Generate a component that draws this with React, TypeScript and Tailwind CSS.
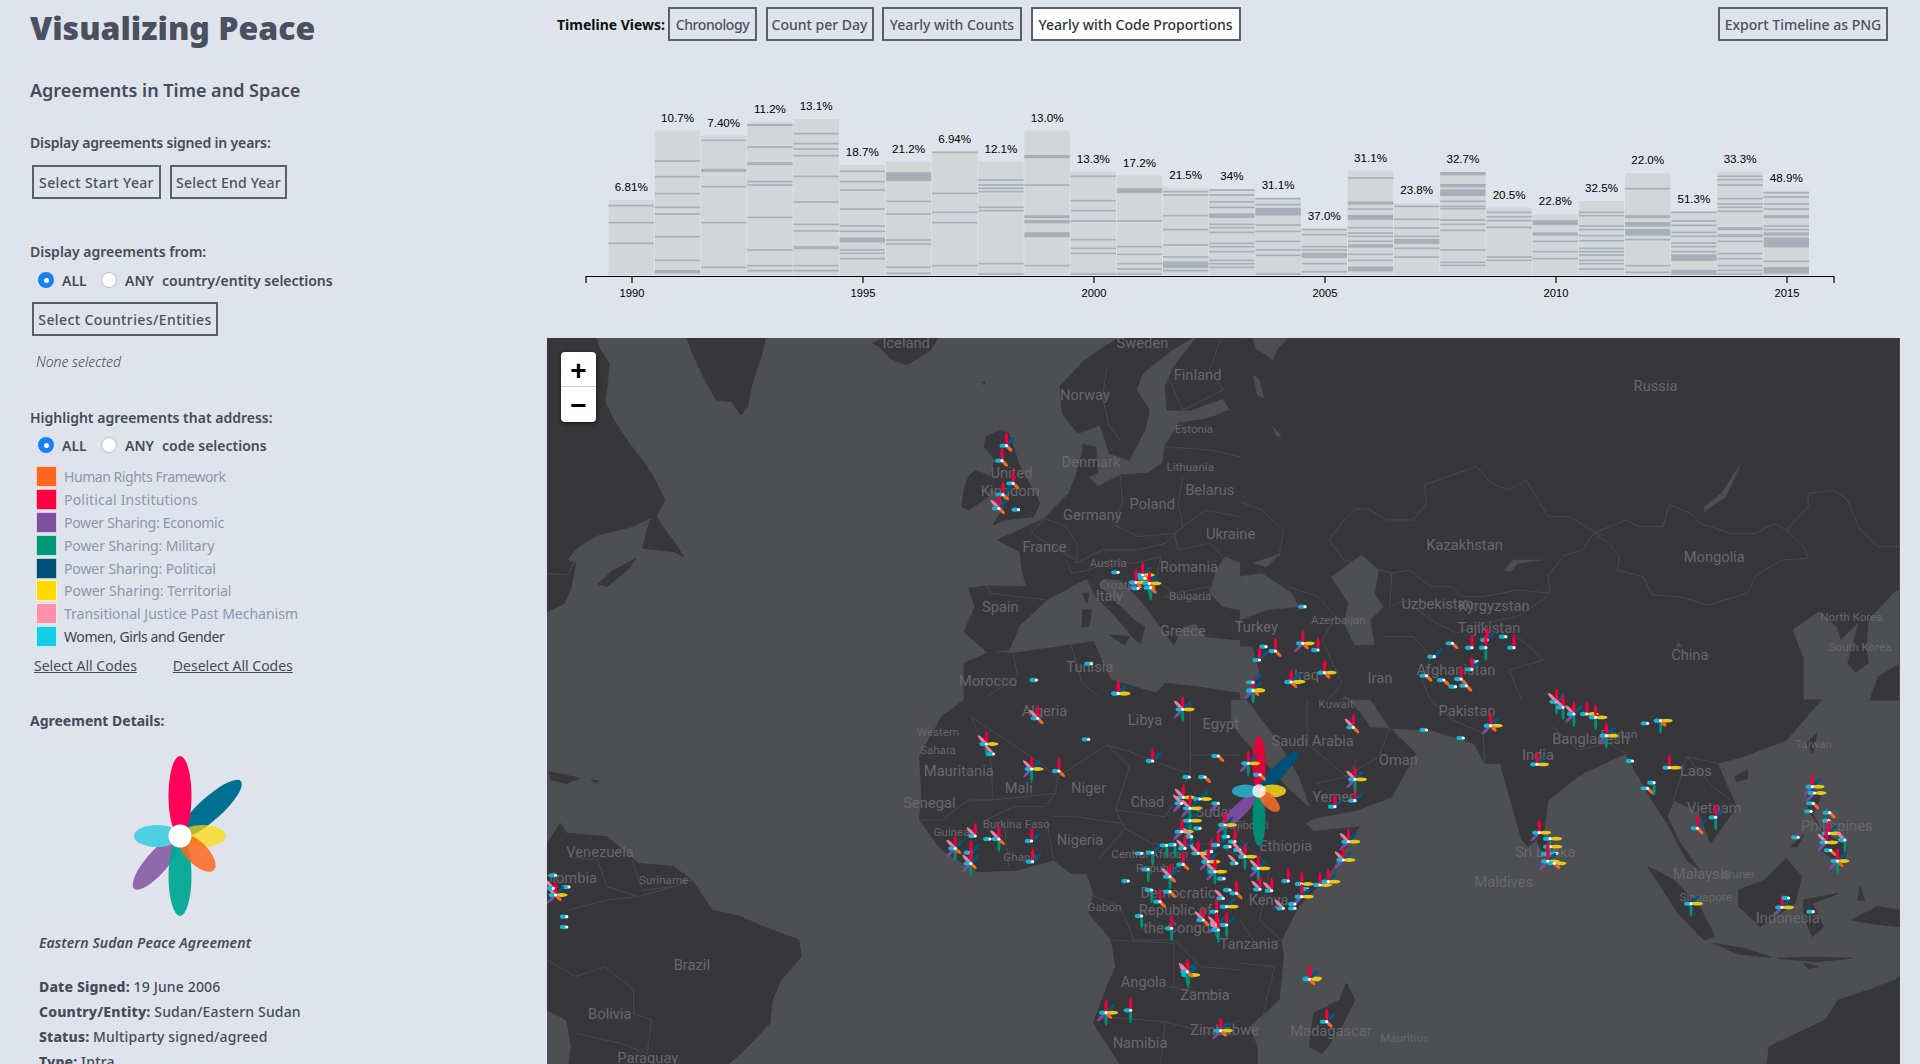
const ocean = "#4e4f53";
const land = "#37363b";
const borderColor = "#4a4a4f";

const petals: Record<string, { a: number; l: number; w: number; c: string }> = {
  b: { a: 45, l: 12, w: 3.2, c: "#005a82" },
  r: { a: 0, l: 13, w: 3.4, c: "#f0003c" },
  v: { a: 225, l: 12, w: 3.2, c: "#7a4ea0" },
  g: { a: 180, l: 13, w: 3.2, c: "#008f78" },
  p: { a: 315, l: 12, w: 3.2, c: "#f080a0" },
  y: { a: 90, l: 12, w: 3.8, c: "#e8c814" },
  o: { a: 135, l: 8, w: 3.4, c: "#f26a24" },
  c: { a: 270, l: 7, w: 4.4, c: "#16b4d0" },
};

type M = [number, number, string];

const Marker = ({ x, y, codes }: { x: number; y: number; codes: string }) => (
  <g transform={`translate(${x} ${y})`}>
    {"brvgpyoc".split("").filter((k) => codes.includes(k)).map((k) => (
      <ellipse key={k} cx={0} cy={-petals[k].l / 2} rx={petals[k].w / 2} ry={petals[k].l / 2} fill={petals[k].c} transform={`rotate(${petals[k].a})`} />
    ))}
    <circle r={1.6} fill="#fff" />
  </g>
);

// crop coordinates -> page pixels
const z7: M[] = [
  [355,41,"rbyc"],[548,88,"rpbygvc"],[266,178,"c"],[458,243,"rbc"],[655,228,"oc"],[95,267,"rpbygvc"],[177,273,"roc"],
  [745,250,"rybvgc"],[568,291,"c"],[615,291,"oc"],[780,284,"oc"],[655,370,"vc"],[550,352,"rpyc"],[600,357,"ybc"],
  [570,385,"rpbygvc"],[545,370,"pvc"],[570,422,"ybgc"],[600,445,"c"],[675,435,"rybvgc"],[545,455,"rybvc"],[575,470,"pgc"],
  [95,483,"rbc"],[98,545,"rbc"],[425,520,"c"],[458,518,"bgc"],[500,496,"gc"],[525,494,"gc"],[555,505,"rpbc"],[595,520,"rpyc"],
  [635,515,"rbc"],[655,495,"rbc"],[685,470,"c"],[705,485,"rc"],[690,500,"c"],[720,510,"pbc"],[735,530,"rpygc"],[625,545,"rpbygvc"],
  [550,553,"roc"],[645,575,"rpygvc"],[710,550,"pc"],[775,565,"rpbygvc"],[445,568,"gc"],[510,590,"rpbgoc"],[385,603,"c"],[672,596,"c"],
  [780,628,"rpc"],[815,632,"rpc"],[865,603,"rc"],[905,612,"ryc"],[925,627,"c"],[960,615,"rybc"],[985,605,"rbyc"],[1045,485,"rpbyvc"],
  [1030,540,"rpbyvc"],[1005,380,"rbc"],[1065,362,"rbc"],[1065,298,"rpbyvgc"],[1060,142,"rpoc"],[455,630,"gc"],[510,635,"oc"],[480,665,"roc"],
  [425,708,"gc"],[515,745,"rgc"],[850,685,"pc"],[885,685,"c"],[905,650,"rbyvc"],[885,672,"c"],[690,630,"c"],[710,640,"roc"],[670,655,"pc"],
  [680,680,"ybc"],[650,695,"rc"],[610,720,"rpoc"],[650,735,"rpbgvc"],[680,735,"rbgc"],[655,750,"rpgc"],[565,885,"rpbygc"],[930,895,"rbyc"],
  [760,30,"rybgovc"],[880,5,"ybc"],[113,115,"rpoc"],
];
const q1: M[] = [
  [1045,347,"rboc"],[1035,392,"rco"],[1060,460,"rco"],[1037,494,"rboc"],[1028,535,"rpbco"],[1072,539,"c"],[1295,727,"c"],
  [1350,735,"rbyoc"],[1335,757,"rcyov"],[1365,760,"rbyogc"],[1355,745,"c"],[1340,775,"c"],[1368,773,"ogc"],[1235,1001,"c"],[1112,1050,"c"],[1295,1090,"rbyc"],
];
const q3: M[] = [
  [1000,132,"rpygc"],[1016,162,"pc"],[1450,815,"rpbogc"],[1268,938,"rbyogvc"],[1323,931,"rgc"],[1525,992,"rbyovc"],
  [975,408,"rpc"],[1028,417,"rpogc"],[930,445,"rpbogvc"],[965,458,"rbc"],[965,490,"rpbogvc"],[1008,417,"c"],
  [35,526,"c"],[65,561,"c"],[35,585,"rpbyovc"],[30,565,"pc"],[60,650,"c"],[60,681,"c"],
];
const q2: M[] = [
  [150,830,"c"],[145,940,"rvyoc"],[60,950,"c"],[82,963,"roc"],[180,960,"rc"],[45,990,"rbc"],[195,1028,"rcyo"],[118,1056,"rbyoc"],[30,1057,"bc"],[30,1082,"ycgv"],
  [490,940,"oc"],[535,953,"rc"],[570,930,"rbc"],[567,953,"rgc"],[613,920,"c"],[632,953,"rc"],[448,980,"bc"],[547,995,"c"],[535,1018,"rbc"],[430,1037,"oc"],
  [470,1050,"oc"],[510,1047,"roc"],[497,1070,"c"],[522,1067,"oc"],
];
const q4: M[] = [
  [430,90,"c"],[515,114,"c"],[578,77,"rbyovc"],[730,5,"rpgbc"],[745,22,"rpgc"],[770,42,"rpbgvc"],[800,42,"ryc"],[820,52,"rgyc"],[845,107,"rbyvgc"],[685,193,"rbyc"],
  [940,70,"c"],[970,62,"yogc"],[905,183,"c"],[990,203,"ryc"],[955,248,"gc"],[940,265,"oc"],[1097,352,"rbgc"],[1055,385,"rboc"],[690,398,"rvyc"],[715,416,"ygc"],
  [715,440,"yc"],[710,462,"rc"],[730,460,"c"],[710,484,"rbyvc"],[725,490,"yoc"],[1320,260,"rbyvc"],[1325,279,"yvc"],[1322,310,"oc"],[1317,334,"c"],[1360,338,"oc"],
  [1358,362,"c"],[1358,400,"rybc"],[1287,412,"c"],[1395,420,"pgc"],[1352,427,"rpyvc"],[1362,451,"oc"],[1378,483,"rbyogvc"],[1040,611,"bgyc"],[1250,622,"rbyvc"],
  [1265,594,"c"],[1322,635,"c"],[160,838,"rbyoc"],[200,965,"rboc"],
];
const markers: M[] = [
  ...z7.map(([x, y, c]): M => [1000 + x / 3, 680 + y / 3, c]),
  ...q1.map(([x, y, c]): M => [540 + x / 2.24, 330 + y / 3, c]),
  ...q3.map(([x, y, c]): M => [540 + x / 2.24, 700 + y / 3, c]),
  ...q2.map(([x, y, c]): M => [1240 + x / 2.306, 330 + y / 3, c]),
  ...q4.map(([x, y, c]): M => [1240 + x / 2.306, 700 + y / 3, c]),
];

const labels: [string, number, number, number?][] = [
  ["Iceland",740,280],["Sweden",933,280],["Finland",978,306],["Norway",886,323],["Russia",1352,315],["Estonia",975,350,9.5],["Denmark",891,377],
  ["Lithuania",972,381,9.5],["Belarus",988,400],["United",826,386],["Kingdom",825,401],["Poland",941,412],["Germany",892,421],["Ukraine",1005,436],
  ["France",853,447],["Austria",905,459,9.5],["Croatia",913,477,9.5],["Romania",971,463],["Italy",906,487],["Bulgaria",972,486,9.5],["Spain",817,496],
  ["Greece",966,515],["Turkey",1026,512],["Kazakhstan",1196,445],["Mongolia",1400,455],["Uzbekistan",1174,493],["Kyrgyzstan",1220,495],
  ["Azerbaijan",1093,506,9.5],["Tajikistan",1216,513],["Afghanistan",1189,547],["China",1380,535],["North Korea",1512,503,9.5],["South Korea",1519,528,9.5],
  ["Iraq",1067,551],["Iran",1127,554],["Kuwait",1091,574,9.5],["Pakistan",1198,581],["Morocco",807,556],["Tunisia",890,545],["Algeria",853,581],
  ["Libya",935,588],["Egypt",997,591],["Saudi Arabia",1072,605],["Oman",1142,621],["Western",766,597,9.5],["Sahara",766,612,9.5],["Mauritania",783,630],
  ["Mali",832,644],["Niger",889,644],["Chad",937,655],["Senegal",759,656],["Sudan",993,663],["Yemen",1090,651],["India",1256,617],["Bangladesh",1299,604],
  ["Bhutan",1322,599,9.5],["Taiwan",1481,607,9.5],["Laos",1385,630],["Vietnam",1400,660],["Philippines",1500,675],["Malaysia",1390,714],["Brunei",1419,713,9.5],
  ["Singapore",1393,732,9.5],["Indonesia",1460,750],["Maldives",1228,720],["Sri Lanka",1262,696],["Burkina Faso",830,672,9.5],["Guinea",777,679,9.5],
  ["Nigeria",882,686],["Ethiopia",1050,691],["Djibouti",1020,673,9.5],["Ghana",833,699,9.5],["Central African",939,697,9.5],["Republic",946,708,9.5],
  ["Gabon",902,740,9.5],["Democratic",962,729],["Republic of",960,743],["the Congo",961,758],["Kenya",1036,735],["Tanzania",1020,771],["Angola",934,802],
  ["Zambia",984,813],["Zimbabwe",1000,841],["Namibia",931,852],["Madagascar",1087,842],["Mauritius",1147,847,9.5],["Brazil",565,788],["Bolivia",498,828],
  ["Paraguay",529,864],["Venezuela",490,696],["Colombia",462,717],["Suriname",542,718,9.5],
];

const Land = ({ pts }: { pts: string }) => <polygon points={pts} fill={land} stroke={land} strokeLinejoin="round" strokeWidth={1} vectorEffect="non-scaling-stroke" />;
const Water = ({ pts }: { pts: string }) => <polygon points={pts} fill={ocean} stroke={ocean} strokeLinejoin="round" strokeWidth={0.5} vectorEffect="non-scaling-stroke" />;
const Border = ({ pts }: { pts: string }) => <polyline points={pts} fill="none" stroke={borderColor} strokeWidth={1} vectorEffect="non-scaling-stroke" />;

const WorldMap = () => (
  <svg viewBox="547 338 1353 726" className="block h-[726px] w-[1353px]">
    <rect x={547} y={338} width={1353} height={726} fill={ocean} />

    {/* north atlantic + europe */}
    <g transform="translate(540 330) scale(0.4464 0.3333)">
      <Land pts="330,25 505,25 495,80 475,160 465,230 450,255 430,215 395,210 370,150 345,80" />
      <Land pts="745,40 770,25 890,25 875,60 820,105 785,85 760,50" />
      <Land pts="16,25 125,25 135,60 155,100 150,170 145,215 165,270 200,340 250,430 280,510 262,555 205,590 130,615 85,650 60,690 80,700 70,770 55,820 16,845" />
      <Land pts="255,545 275,590 300,635 322,680 300,665 230,655 240,600" />
      <Land pts="130,762 160,725 215,685 200,715 150,770" />
      <Land pts="990,155 997,155 995,165" />
      <Land pts="1030,300 1050,310 1065,370 1075,410 1100,470 1120,520 1105,560 1040,570 1015,585 1040,530 1030,490 1000,470 1010,430 1020,390 995,350 1000,320" />
      <Land pts="975,420 1010,440 1005,500 960,540 945,530 950,480 960,440" />
      <Land pts="1295,25 1220,90 1165,170 1170,250 1205,310 1255,285 1275,370 1320,390 1355,300 1365,240 1335,180 1350,130 1415,60 1460,25" />
      <Land pts="1215,345 1245,350 1250,430 1225,440" />
      <Land pts="1568,25 1470,25 1420,110 1400,170 1405,240 1460,240 1530,205 1545,240 1500,265 1430,280 1400,350 1395,400 1360,430 1300,435 1250,470 1228,440 1235,390 1220,340 1200,440 1185,490 1130,565 1075,600 1025,630 1075,665 1080,720 1090,770 1000,768 960,775 975,830 950,905 1000,965 1050,960 1075,885 1135,810 1190,770 1225,745 1245,800 1290,860 1330,925 1345,940 1355,890 1330,870 1300,830 1255,770 1260,745 1300,750 1345,810 1385,880 1420,945 1440,890 1470,880 1490,920 1568,930" />
      <Land pts="1215,840 1235,840 1230,890 1215,890" />
      <Land pts="1275,915 1320,920 1310,945" />
      <Land pts="1215,790 1230,790 1225,820" />
      <Land pts="950,1000 1010,965 1060,970 1190,945 1240,935 1260,1000 1280,1050 1380,1090 1400,1060 1470,1070 1568,1090 1568,1112 950,1112" />
      <Water pts="1568,700 1535,680 1515,720 1500,790 1530,830 1568,840" />
      <Border pts="1130,565 1180,590 1205,650 1200,700 1260,660 1340,660 1400,640 1440,590 1430,520 1440,440" />
      <Border pts="1300,435 1305,520 1280,580 1340,620 1420,610 1490,540 1568,560" />
      <Border pts="1180,690 1190,730 1230,720 1280,690 1330,700 1390,680" />
      <Border pts="1420,610 1430,660 1500,640 1530,680" />
      <Border pts="1390,680 1380,750 1420,790 1500,770 1500,810 1400,800" />
      <Border pts="1130,565 1100,610 1200,690" />
      <Border pts="1000,768 1010,790 1135,810" />
      <Border pts="1270,110 1260,200 1275,290 1300,330" />
      <Border pts="1400,120 1440,240 1530,180 1500,120 1525,25" />
      <Border pts="1400,350 1500,360 1568,380" />
      <Border pts="1060,970 1070,1040 1000,1100" />
      <Border pts="1190,945 1215,1060 1250,1100" />
      <Border pts="16,730 60,735 90,670" />
    </g>

    {/* russia + central asia */}
    <g transform="translate(1240 330) scale(0.4337 0.3333)">
      <rect x={0} y={25} width={1520} height={1087} fill={land} />
      <Water pts="30,25 110,25 85,60 75,90 55,70 35,55" />
      <Water pts="30,135 45,150 55,205 40,195" />
      <Water pts="75,290 95,315 85,320" />
      <Water pts="1155,400 1140,445 1120,500 1070,545 1070,530 1110,490 1140,430" />
      <Water pts="280,675 320,720 310,790 330,830 300,870 310,945 265,945 240,880 250,820 210,740" />
      <Water pts="0,740 50,730 120,790 135,830 60,840 0,870" />
      <Water pts="30,700 95,670 60,710" />
      <Water pts="610,720 630,690 695,690 640,700 625,725" />
      <Water pts="0,950 28,950 45,1030 20,1100 0,1112" />
      <Water pts="1300,1112 1300,985 1275,900 1335,845 1375,890 1385,930 1425,880 1400,1000 1420,1030 1450,1000 1445,950 1450,870 1510,785 1520,780 1520,1000 1470,1040 1450,1112" />
      <Water pts="240,1100 262,1112 235,1112" />
      <Water pts="1010,935 1020,950 1005,950" />
      <Border pts="205,630 240,570 270,535 300,540 340,570 400,570 430,520 425,465 545,410 580,460 620,480 660,450 710,560 760,560 810,600 830,615" />
      <Border pts="815,610 890,570 920,590 975,590 990,525 1040,550 1060,580 1130,610 1190,610 1230,580 1260,600 1300,650 1310,685 1250,690 1190,735 1170,790 1080,825 1010,800 950,795 930,740 870,720 875,680 850,640 820,615" />
      <Border pts="1260,600 1310,530 1310,490 1370,480 1400,510 1430,600 1470,650 1520,650" />
      <Border pts="205,630 240,690 350,730 390,720 440,770 490,770 510,800 560,800 640,780 715,790 710,735 750,675 790,660 815,610" />
      <Border pts="350,730 345,830 380,810 440,870 500,910 560,880 640,860 710,800" />
      <Border pts="330,920 400,920 440,980 420,1050 440,1112" />
      <Border pts="640,920 700,990 620,1020 650,1112" />
      <Border pts="0,515 50,540 100,600 90,680" />
      <Border pts="110,770 180,800 220,860 190,930 235,1060 200,1112" />
    </g>

    {/* south america + west africa */}
    <g transform="translate(540 700) scale(0.4464 0.3333)">
      <Land pts="950,0 900,50 850,170 855,280 850,360 900,450 980,515 1070,510 1150,480 1190,520 1225,520 1240,580 1230,640 1280,720 1290,800 1270,860 1240,970 1300,1095 1570,1095 1570,0" />
      <Land pts="16,430 45,370 60,400 150,410 220,490 300,500 340,540 385,630 450,650 500,680 580,720 585,770 540,840 520,900 515,970 450,1060 420,1095 65,1095 70,1040 60,960 16,930" />
      <Land pts="20,215 90,235 60,250 25,240" />
      <Land pts="115,240 132,243 125,250" />
      <Border pts="965,50 1100,170 1160,230 1155,280 1015,300 1010,180 965,50" />
      <Border pts="1160,230 1270,135 1320,155 1440,215 1457,215 1457,0" />
      <Border pts="1457,165 1570,165" />
      <Border pts="1270,135 1320,200 1290,330 1310,385 1250,480" />
      <Border pts="1145,350 1200,350 1300,370" />
      <Border pts="1000,360 1060,320 1130,320 1155,280" />
      <Border pts="1310,385 1370,430 1420,440 1510,430 1568,470" />
      <Border pts="1290,330 1400,350 1430,290 1457,215" />
      <Border pts="850,360 900,360 960,300 1015,300" />
      <Border pts="1040,370 1050,500" />
      <Border pts="1135,360 1150,480" />
      <Border pts="1225,580 1300,620 1330,720 1420,720 1480,800 1568,810" />
      <Border pts="1280,720 1420,730 1420,860" />
      <Border pts="1250,950 1400,965 1500,1000 1568,960" />
      <Border pts="1400,970 1390,1095" />
      <Border pts="1410,860 1490,880 1550,880" />
      <Border pts="60,470 130,480 150,560 220,590 300,560 340,540" />
      <Border pts="205,480 230,570 300,560" />
      <Border pts="16,780 80,830 145,800 210,870 210,940 250,960 240,1060 180,1030 80,1000" />
      <Border pts="65,630 150,600 220,590" />
    </g>

    {/* indian ocean */}
    <g transform="translate(1240 700) scale(0.4337 0.3333)">
      <Land pts="0,1095 40,1095 40,1040 20,980 90,900 100,770 95,720 135,620 200,530 275,380 170,395 150,370 170,355 270,330 350,290 405,160 345,85 440,90 540,130 565,190 600,190 650,420 665,440 700,400 710,300 790,220 890,160 910,210 945,290 985,370 1030,480 1060,510 1015,430 985,350 1000,300 1060,340 1085,430 1145,320 1100,190 1160,170 1260,120 1340,0 0,0" />
      <Water pts="-20,0 15,0 45,50 90,130 135,230 160,320 115,270 60,190 10,120 -20,70" />
      <Water pts="250,0 300,0 345,85 300,80 280,40" />
      <Land pts="695,400 720,430 710,462 695,450 685,425" />
      <Land pts="245,850 265,900 230,990 190,1060 160,1040 170,940 230,900" />
      <Land pts="940,500 1000,540 1060,620 1095,710 1070,720 1010,640" />
      <Land pts="1260,475 1295,530 1280,610 1200,680 1150,620 1150,570 1210,540" />
      <Land pts="1300,600 1380,580 1320,610 1345,680 1320,710 1300,650" />
      <Land pts="1090,730 1160,745 1225,772 1150,762" />
      <Land pts="1240,775 1320,772 1410,775 1330,785" />
      <Land pts="1300,790 1335,800 1310,805" />
      <Land pts="1410,660 1470,620 1520,630 1520,680 1450,670" />
      <Land pts="1215,1095 1220,1040 1350,960 1380,900 1450,870 1510,840 1520,830 1520,1095" />
      <Land pts="1330,100 1320,160 1305,130" />
      <Land pts="1140,230 1170,210 1170,235 1145,245" />
      <Land pts="1310,260 1340,290 1320,340 1340,390 1400,440 1390,500 1340,450 1350,400 1310,330" />
      <Land pts="1270,440 1300,405 1285,440" />
      <Land pts="1430,560 1440,600 1425,600" />
      <Border pts="345,85 320,170 245,230 175,250" />
      <Border pts="155,0 155,130 245,230 270,180" />
      <Border pts="565,190 560,100 490,60 440,0" />
      <Border pts="890,160 850,130 780,150 720,80" />
      <Border pts="1000,300 1030,170 1100,190" />
      <Border pts="1030,170 1090,260 1130,300" />
      <Border pts="0,420 70,500 45,660 95,720" />
      <Border pts="0,790 80,800 50,960 90,900" />
      <Border pts="0,660 40,740 95,720" />
    </g>

    {/* labels */}
    <g transform="scale(1.2245)" className="font-['Roboto',sans-serif]">
      {labels.map(([t, x, y, s]) => (
        <text key={t + x} x={x} y={y + 4} textAnchor="middle" fontSize={s ?? 12} fill="#68686d">{t}</text>
      ))}
    </g>

    {/* selected agreement */}
    <g transform="translate(1259 791)">
      <ellipse cy={-27.5} rx={6.5} ry={27.5} fill="#e8003a" opacity={0.95} />
      <ellipse cy={-27.5} rx={6.5} ry={27.5} fill="#005078" transform="rotate(45)" />
      <ellipse cy={-27.5} rx={6.5} ry={27.5} fill="#7a4b9a" transform="rotate(225)" />
      <ellipse cy={-27.5} rx={6.5} ry={27.5} fill="#008c74" transform="rotate(180)" />
      <ellipse cy={-13.5} rx={6.5} ry={13.5} fill="#2aa9c4" transform="rotate(270)" opacity={0.95} />
      <ellipse cy={-13.5} rx={6.5} ry={13.5} fill="#e5c51a" transform="rotate(90)" opacity={0.95} />
      <ellipse cy={-14} rx={6.5} ry={14} fill="#e8672d" transform="rotate(135)" opacity={0.95} />
      <circle r={6.8} fill="#fff" opacity={0.8} />
    </g>

    {markers.map(([x, y, c], i) => <Marker key={i} x={x} y={y} codes={c} />)}
  </svg>
);

type Bar = { label: string; top: number; lines: (number | [number, number])[] };

const bars: Bar[] = [
  { label: "6.81%", top: 600, lines: [617,668,730] },
  { label: "10.7%", top: 392, lines: [483,530,581,622,642,710,781,[815,10]] },
  { label: "7.40%", top: 407, lines: [421,[511,9],560,668,802] },
  { label: "11.2%", top: 367, lines: [[375,6],441,[491,9],545,555,652,750,797,812] },
  { label: "13.1%", top: 357, lines: [401,431,447,467,529,606,673,693,[743,9],797,812] },
  { label: "18.7%", top: 495, lines: [514,545,570,627,678,694,[720,15],750,760,776] },
  { label: "21.2%", top: 485, lines: [[530,27],604,642,720,732,802,820] },
  { label: "6.94%", top: 455, lines: [457,580,637,668,797] },
  { label: "12.1%", top: 485, lines: [540,555,565,575,622,632,791,822] },
  { label: "13.0%", top: 392, lines: [[470,10],555,[650,9],[665,10],[704,15],797] },
  { label: "13.3%", top: 515, lines: [529,602,632,663,719,745,760,822] },
  { label: "17.2%", top: 527, lines: [[572,15],663,740,763,791,807,822] },
  { label: "21.5%", top: 563, lines: [575,585,647,689,735,771,[794,20],812] },
  { label: "34%", top: 567, lines: [570,585,606,622,[647,14],673,683,697,730,740,755,781,791,802] },
  { label: "31.1%", top: 593, lines: [596,614,[635,23],675,694,724,750,766,822] },
  { label: "37.0%", top: 686, lines: [689,704,740,750,[766,15],791,815] },
  { label: "31.1%", top: 512, lines: [534,[609,10],627,[652,15],683,699,709,724,[738,10],763,781,[807,15]] },
  { label: "23.8%", top: 610, lines: [619,658,684,709,[724,15],745,771] },
  { label: "32.7%", top: 515, lines: [[521,10],[557,10],[578,20],604,619,626,660,673,691,750,787,796] },
  { label: "20.5%", top: 623, lines: [637,650,662,682,771,781] },
  { label: "22.8%", top: 643, lines: [[668,15],[702,10],724,755,776] },
  { label: "32.5%", top: 603, lines: [637,647,678,689,707,722,745,755,765,781,791,807] },
  { label: "22.0%", top: 520, lines: [566,[650,9],[673,14],[697,20],719,797,817] },
  { label: "51.3%", top: 635, lines: [637,663,676,697,709,729,740,755,[773,20],[817,15]] },
  { label: "33.3%", top: 515, lines: [529,539,555,596,612,622,634,[686,9],[707,9],724,761,776,797,811,822] },
  { label: "48.9%", top: 572, lines: [578,591,612,627,[650,9],678,689,[702,10],[727,30],784,[811,20]] },
];

const Timeline = () => (
  <svg viewBox="547 41 1373 297" className="block h-[297px] w-[1373px] font-['Liberation_Sans',Arial,sans-serif]">
    {bars.map((b, i) => {
      const x = 608.6 + i * 46.2;
      return (
        <g key={i}>
          <rect x={x} y={b.top / 3} width={45.4} height={275 - b.top / 3} fill="#d2d6d9" />
          {b.lines.map((l, j) => {
            const [c, h] = Array.isArray(l) ? l : [l, 5];
            return <rect key={j} x={x} y={(c - h / 2) / 3} width={45.4} height={h / 3} fill="#a8afb9" />;
          })}
          <text x={x + 22.7} y={b.top / 3 - 9} textAnchor="middle" fontSize={11.6} fill="#000">{b.label}</text>
        </g>
      );
    })}
    <path d="M586 283V276.5H1834V283" fill="none" stroke="#000" strokeWidth={1.2} />
    {[1990, 1995, 2000, 2005, 2010, 2015].map((y, i) => {
      const x = 632 + i * 231;
      return (
        <g key={y}>
          <line x1={x} x2={x} y1={276.5} y2={283} stroke="#000" strokeWidth={1.2} />
          <text x={x} y={297} textAnchor="middle" fontSize={11.2} fill="#000">{y}</text>
        </g>
      );
    })}
  </svg>
);

const Btn = ({ children, active, className = "" }: { children: string; active?: boolean; className?: string }) => (
  <button className={`h-[34px] shrink-0 border-2 border-[#5a6070] whitespace-nowrap text-[14px] font-medium ${active ? "bg-white text-[#2d3340]" : "text-[#4a5160]"} ${className}`}>
    {children}
  </button>
);

const RadioRow = ({ rest }: { rest: string }) => (
  <div className="flex h-5 items-center pl-2 text-[14px] font-semibold text-[#454b5a]">
    <span className="flex h-4 w-4 items-center justify-center rounded-full bg-[#1a7ff5]">
      <span className="h-[5px] w-[5px] rounded-full bg-white" />
    </span>
    <span className="ml-2 w-[39px]">ALL</span>
    <span className="h-4 w-4 rounded-full border border-[#b8bcc4] bg-white" />
    <span className="ml-2 w-[37px]">ANY</span>
    <span>{rest}</span>
  </div>
);

const codes = [
  ["#ff6620", "Human Rights Framework", "tracking-[-0.45px]"],
  ["#ff0040", "Political Institutions", "tracking-[0.2px]"],
  ["#7e50a0", "Power Sharing: Economic", "tracking-[-0.3px]"],
  ["#009a7a", "Power Sharing: Military", "tracking-[-0.1px]"],
  ["#005078", "Power Sharing: Political", "tracking-[-0.1px]"],
  ["#ffda00", "Power Sharing: Territorial", ""],
  ["#ff8fab", "Transitional Justice Past Mechanism", ""],
  ["#10cfe6", "Women, Girls and Gender", "tracking-[-0.4px]"],
];

const BigFlower = () => (
  <svg viewBox="0 0 300 170" className="mt-[19px] block h-[170px] w-[300px]">
    <g transform="translate(150 86)">
      <ellipse cy={-41} rx={11.5} ry={41} fill="#007092" transform="rotate(48)" />
      <ellipse cy={-40} rx={11.5} ry={40} fill="#ff0059" />
      <ellipse cy={-35} rx={11} ry={35} fill="#9068ac" transform="rotate(221)" />
      <ellipse cy={-40} rx={11.5} ry={40} fill="#00a896" fillOpacity={0.95} transform="rotate(180)" />
      <ellipse cy={-23} rx={11} ry={23} fill="#4fcfe2" transform="rotate(270)" />
      <ellipse cy={-23} rx={11} ry={23} fill="#ffda00" fillOpacity={0.7} transform="rotate(90)" />
      <ellipse cy={-24} rx={11} ry={24} fill="#ff6620" fillOpacity={0.85} transform="rotate(135)" />
      <circle r={11.5} fill="#fff" />
    </g>
  </svg>
);

const Detail = ({ k, v }: { k: string; v: string }) => (
  <p className="pl-[9px] text-[14px] leading-[25px] font-medium tracking-[0.15px] text-[#454b5a]">
    <b className="font-extrabold">{k}:</b> {v}
  </p>
);

export default function App() {
  return (
    <div className="flex h-[1064px] w-[1920px] overflow-hidden bg-[#dfe3eb] font-['Noto_Sans',sans-serif]">
      {/* sidebar */}
      <div className="w-[547px] shrink-0 pl-[30px] pt-[8px] text-[#454b5a]">
        <h1 className="text-[32px] leading-[40px] font-black text-[#4a5060]">Visualizing Peace</h1>
        <h2 className="mt-[30px] text-[18px] leading-[24px] font-semibold">Agreements in Time and Space</h2>

        <p className="mt-[31px] text-[14px] leading-5 font-semibold tracking-[-0.15px]">Display agreements signed in years:</p>
        <div className="mt-[12px] ml-[2px] flex gap-[9px]">
          <Btn className="w-[129px] tracking-[0.35px]">Select Start Year</Btn>
          <Btn className="w-[117px] tracking-[0.2px]">Select End Year</Btn>
        </div>

        <p className="mt-[43px] text-[14px] leading-5 font-semibold">Display agreements from:</p>
        <div className="mt-[8px]"><RadioRow rest="country/entity selections" /></div>
        <div className="mt-[12px] ml-[2px] flex"><Btn className="w-[186px] tracking-[0.4px]">Select Countries/Entities</Btn></div>
        <p className="mt-[16px] ml-[6px] text-[14px] leading-5 font-light italic">None selected</p>

        <p className="mt-[36px] text-[14px] leading-5 font-semibold">Highlight agreements that address:</p>
        <div className="mt-[7px]"><RadioRow rest="code selections" /></div>
        <div className="mt-[10.6px] ml-[6px]">
          {codes.map(([c, name, t], i) => (
            <div key={name} className="flex h-[22.8px] items-center gap-[7px]">
              <span className="h-[21px] w-[21px] border border-white/70" style={{ backgroundColor: c }} />
              <span className={`text-[14px] ${t} ${i === 7 ? "text-[#3d4350]" : "text-[#8a97ae]"}`}>{name}</span>
            </div>
          ))}
        </div>
        <div className="mt-[8px] ml-[4px] flex gap-[36px] text-[14px] leading-5 underline">
          <span>Select All Codes</span>
          <span>Deselect All Codes</span>
        </div>

        <p className="mt-[35px] text-[14px] leading-5 font-bold">Agreement Details:</p>
        <BigFlower />
        <p className="mt-[13px] ml-[9px] text-[14px] leading-5 font-semibold tracking-[0.1px] italic">Eastern Sudan Peace Agreement</p>
        <div className="mt-[21.5px]">
          <Detail k="Date Signed" v="19 June 2006" />
          <Detail k="Country/Entity" v="Sudan/Eastern Sudan" />
          <Detail k="Status" v="Multiparty signed/agreed" />
          <Detail k="Type" v="Intra" />
        </div>
      </div>

      {/* main */}
      <div className="flex flex-1 flex-col">
        <div className="flex h-[41px] items-end pl-[10px] pr-[32px]">
          <span className="w-[111px] shrink-0 self-center pt-[7px] text-[14px] font-bold text-[#111]">Timeline Views:</span>
          <div className="flex flex-1 gap-[8.5px]">
            <Btn className="w-[89px] tracking-[-0.4px]">Chronology</Btn>
            <Btn className="w-[108px]">Count per Day</Btn>
            <Btn className="w-[140px]">Yearly with Counts</Btn>
            <Btn active className="w-[210px]">Yearly with Code Proportions</Btn>
            <Btn className="ml-auto w-[170px]">Export Timeline as PNG</Btn>
          </div>
        </div>
        <Timeline />
        <div className="relative h-[726px] w-[1353px]">
          <WorldMap />
          <div className="absolute top-[14px] left-[14px] flex w-[35px] flex-col overflow-hidden rounded-[4px] bg-white font-['Liberation_Sans',sans-serif] shadow-[0_1px_5px_rgba(0,0,0,0.65)]">
            <span className="flex h-[35px] items-center justify-center border-b border-[#ccc] pt-[3px] text-[28px] leading-none font-bold text-black">+</span>
            <span className="flex h-[35px] items-center justify-center pt-[3px] text-[28px] leading-none font-bold text-black">−</span>
          </div>
        </div>
      </div>
    </div>
  );
}
